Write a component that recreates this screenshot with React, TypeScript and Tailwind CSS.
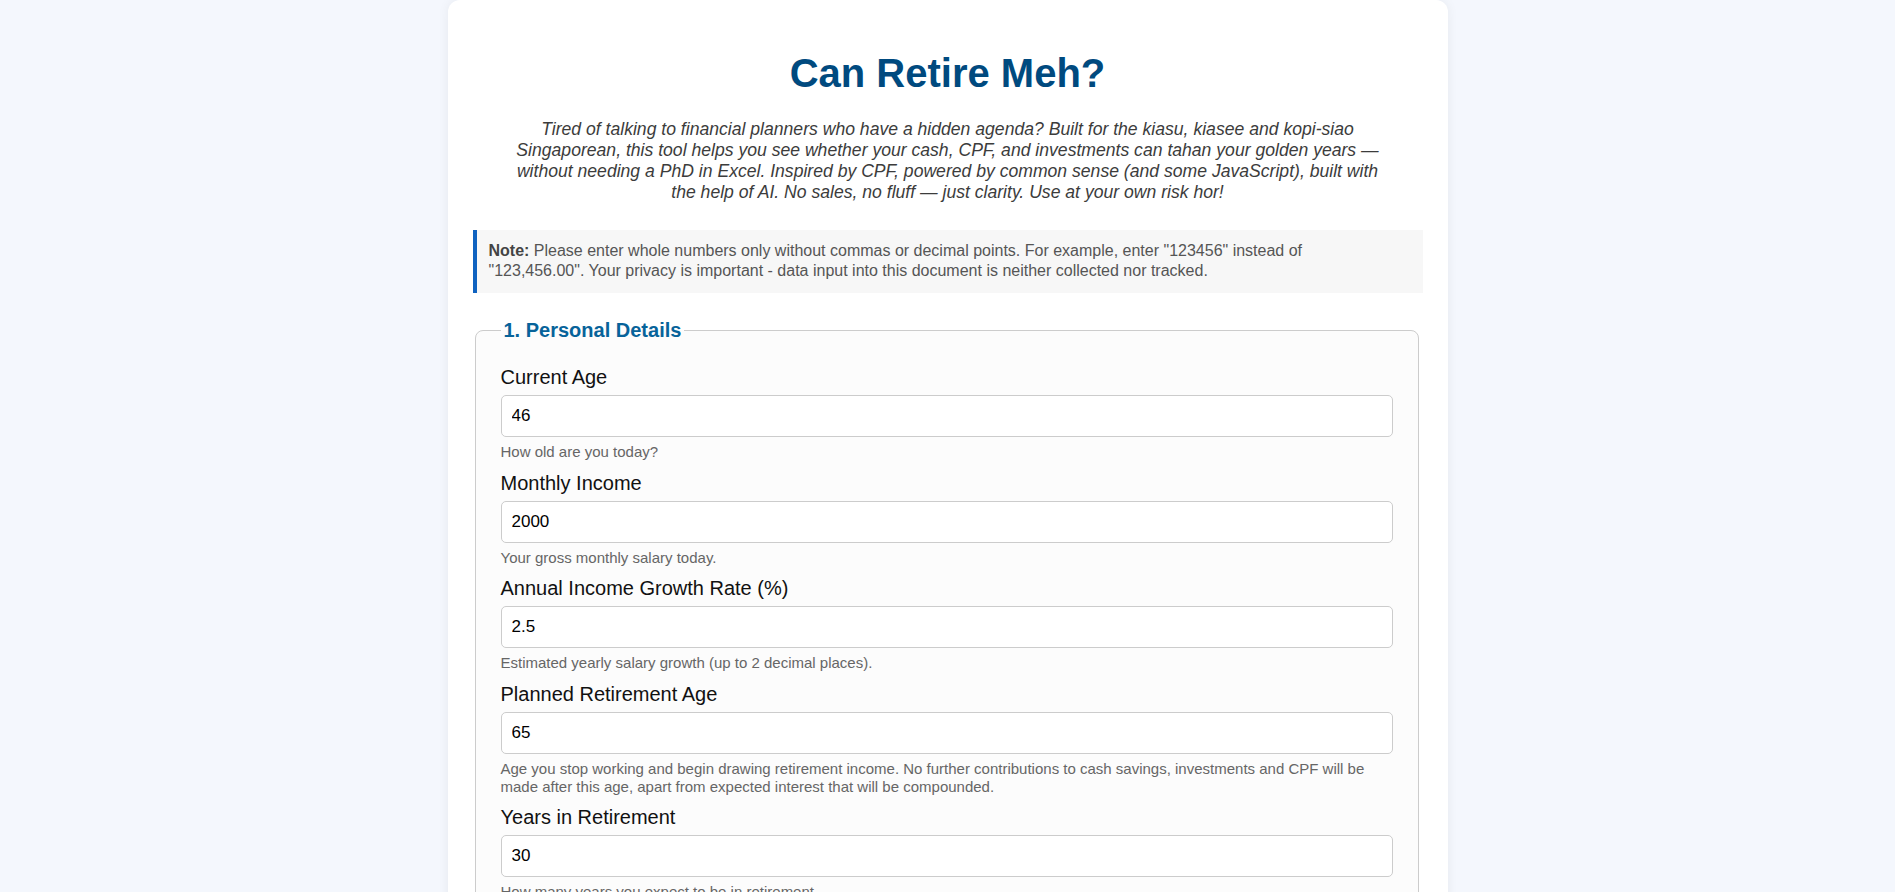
import React from 'react';

type Field = {
    label: string;
    value: string;
    hint: string;
};

const fields: Field[] = [
    { label: 'Current Age', value: '46', hint: 'How old are you today?' },
    { label: 'Monthly Income', value: '2000', hint: 'Your gross monthly salary today.' },
    { label: 'Annual Income Growth Rate (%)', value: '2.5', hint: 'Estimated yearly salary growth (up to 2 decimal places).' },
    {
        label: 'Planned Retirement Age',
        value: '65',
        hint: 'Age you stop working and begin drawing retirement income. No further contributions to cash savings, investments and CPF will be made after this age, apart from expected interest that will be compounded.',
    },
    { label: 'Years in Retirement', value: '30', hint: 'How many years you expect to be in retirement.' },
];

function FormField({ label, value, hint }: Field) {
    return (
        <div className="mb-[9.5px]">
            <label className="block text-[20px] leading-[25px] text-[#111] mb-[5px]">{label}</label>
            <input
                type="text"
                defaultValue={value}
                className="block w-full h-[42px] px-[10px] text-[17px] text-black bg-white border border-[#cccccc] rounded-[5px] outline-none"
            />
            <div className="mt-[6px] text-[15px] leading-[18px] text-[#666]">{hint}</div>
        </div>
    );
}

export default function App() {
    return (
        <div className="h-screen overflow-hidden bg-[#f4f7fd] font-['Liberation_Sans',Arial,sans-serif]">
            <div className="max-w-[1000px] mx-auto bg-white rounded-t-[12px] shadow-[0_0_12px_rgba(0,0,0,0.06)] px-[25px] pt-[25px] pb-10 min-h-full">
                <h1 className="mt-6 mb-[22px] text-center text-[40px] leading-[48px] font-bold text-[#004a7f]">
                    Can Retire Meh?
                </h1>
                <p className="max-w-[875px] mx-auto mb-[27px] text-center italic text-[17.6px] leading-[21.1px] text-[#3c3c3c]">
                    Tired of talking to financial planners who have a hidden agenda? Built for the kiasu, kiasee and kopi-siao
                    Singaporean, this tool helps you see whether your cash, CPF, and investments can tahan your golden years —
                    without needing a PhD in Excel. Inspired by CPF, powered by common sense (and some JavaScript), built with
                    the help of AI. No sales, no fluff — just clarity. Use at your own risk hor!
                </p>
                <div className="mb-[25px] bg-[#f7f7f7] border-l-[4px] border-[#0f62c0] pl-[12px] pr-[32px] pt-[11px] pb-[12px] text-[16px] leading-[20px] text-[#555]">
                    <strong className="text-[#444]">Note:</strong> Please enter whole numbers only without commas or decimal
                    points. For example, enter "123456" instead of "123,456.00". Your privacy is important - data input into
                    this document is neither collected nor tracked.
                </div>
                <fieldset className="ml-[2px] mr-[4px] border border-[#cccccc] rounded-[8px] bg-[#fcfcfc] px-[25px] pt-[22px] pb-[25px]">
                    <legend className="px-[3px] text-[20px] leading-[25px] font-bold text-[#07639a]">1. Personal Details</legend>
                    {fields.map((f) => (
                        <FormField key={f.label} {...f} />
                    ))}
                </fieldset>
            </div>
        </div>
    );
}
